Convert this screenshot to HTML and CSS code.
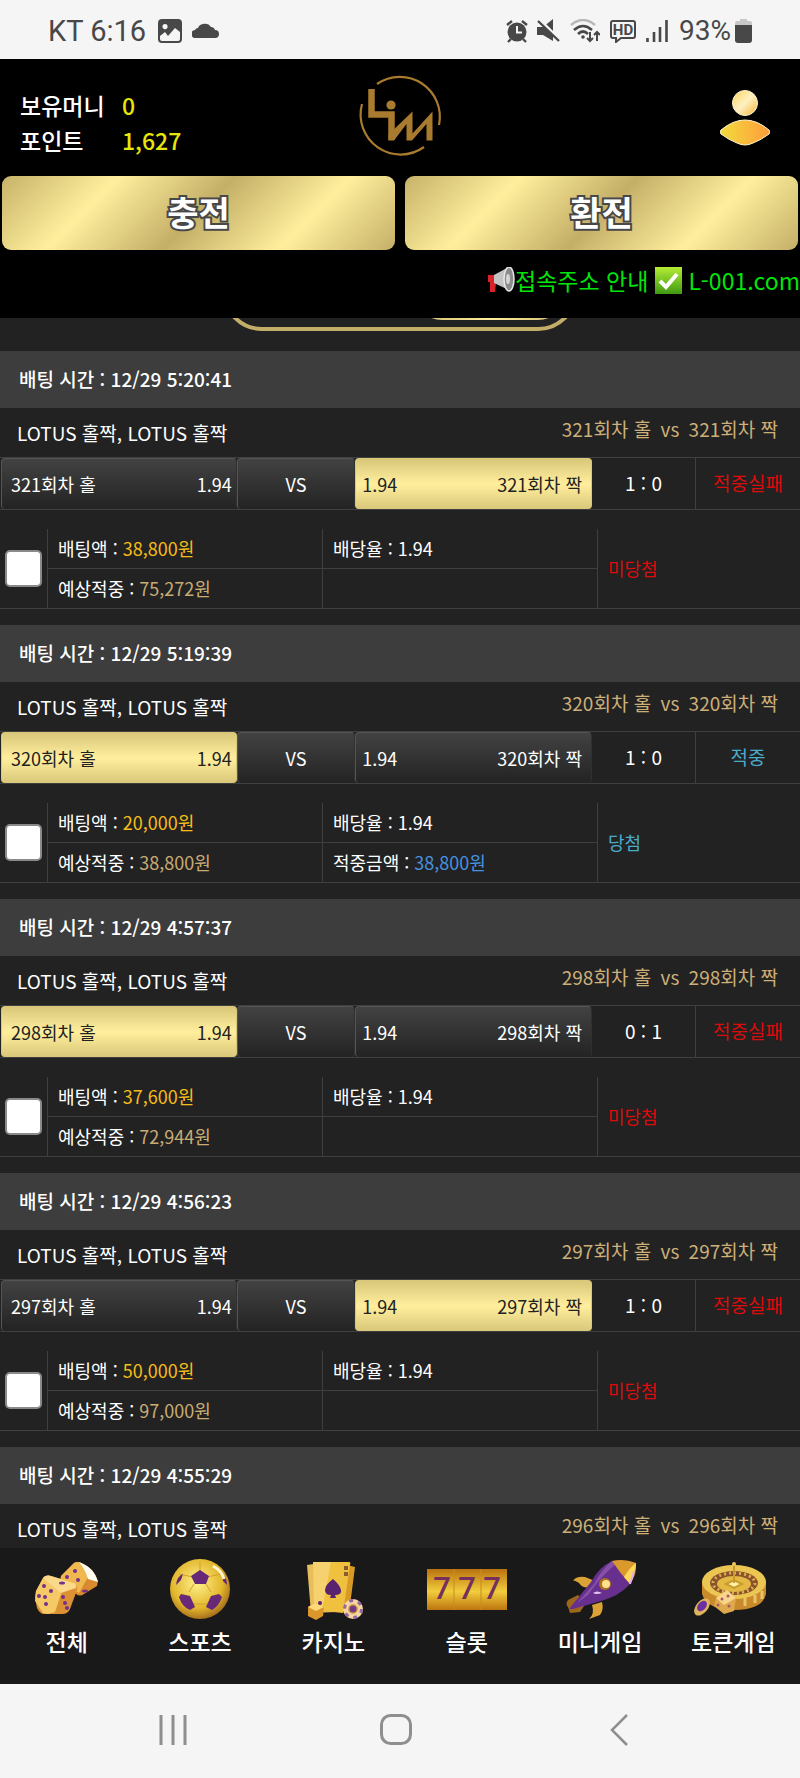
FILE: index.html
```html
<!DOCTYPE html>
<html lang="ko">

<head>
    <meta charset="UTF-8">
    <meta name="viewport" content="width=device-width, initial-scale=1.0">
    <title>배팅 내역</title>
    <link rel="stylesheet" href="styles.css">
</head>

<body>
    <div class="status-bar">
        <span>KT 6:16</span>
        <svg class="ic-photo" width="24" height="24" viewBox="0 0 24 24">
            <path fill="#484848" fill-rule="evenodd" d="M4 0h16q4 0 4 4v16q0 4-4 4H4q-4 0-4-4V4q0-4 4-4zM7 5a2.6 2.6 0 1 0 .1 0zM2 17v3q0 2 2 2h16q2 0 2-2v-7l-5-4-7 8-3-4z" />
        </svg>
        <svg width="27" height="15" viewBox="0 0 27 15">
            <path fill="#484848" d="M4 15a4 4 0 0 1-1-8q1-2 3-2a7 6 0 0 1 13-1q3 0 4 3a4 4 0 0 1 0 8z" />
        </svg>
        <div class="status-right">
            <svg width="22" height="24" viewBox="0 0 22 24">
                <circle cx="11" cy="13" r="9.5" fill="#484848" />
                <path d="M1 6l5-4M21 6l-5-4M5 20l-3 3M17 20l3 3" stroke="#484848" stroke-width="2.4" fill="none" />
                <path d="M11 7v6.500h5" stroke="#f5f5f5" stroke-width="2" fill="none" />
            </svg>
            <svg width="24" height="24" viewBox="0 0 24 24">
                <path fill="#484848" d="M0 8h6l10-8v22L6 16H0z" />
                <path d="M2 0l22 22" stroke="#f5f5f5" stroke-width="3" />
                <path d="M1 2l21 20" stroke="#484848" stroke-width="2.400" />
            </svg>
            <svg width="30" height="24" viewBox="0 0 30 24">
                <g fill="none" stroke-width="2.600">
                    <path d="M1 6q12-10 24 0" stroke="#b8b8b8" />
                    <path d="M4 11q9-8 18 0M8 15q5-5 10 0" stroke="#484848" />
                    <path d="M20 13v9m-3-3l3 3 3-3M27 22v-9m-3 3l3-3 3 3" stroke="#484848" stroke-width="2" />
                </g>
                <circle cx="13" cy="18" r="1.800" fill="#484848" />
            </svg>
            <svg width="28" height="24" viewBox="0 0 28 24">
                <path d="M4 2h20q2 0 2 2v13q0 2-2 2H12l-5 4v-4H4q-2 0-2-2V4q0-2 2-2z" fill="none" stroke="#484848" stroke-width="2" />
                <text class="hd-text" x="14" y="16" text-anchor="middle">HD</text>
            </svg>
            <svg width="22" height="24" viewBox="0 0 22 24">
                <path d="M1.500 19v4M8 13v10M14 8v15M20.500 1v22" stroke="#484848" stroke-width="2.600" />
            </svg>
            <div class="battery">
                <span>93%</span>
                <svg width="17" height="24" viewBox="0 0 17 24">
                    <path d="M5 0h7v2h3q2 0 2 2v4H0V4q0-2 2-2h3z" fill="#c8c8c8" />
                    <path d="M0 6h17v15q0 3-3 3H3q-3 0-3-3z" fill="#484848" />
                </svg>
            </div>
        </div>
    </div>

    <header class="header">
        <div class="header-top">
            <dl class="wallet">
                <dt>보유머니</dt>
                <dd>0</dd>
                <dt>포인트</dt>
                <dd>1,627</dd>
            </dl>
            <a href="#" class="logo" aria-label="LIM">
                <svg width="100" height="100" viewBox="0 0 100 100" fill="none" stroke="#a87b2e">
                    <path d="M27 20A40 40 0 0 1 89 61M74 83A40 40 0 0 1 12 40" stroke-width="2.200" />
                    <path d="M21.500 25v25.500h20V76" stroke-width="6.500" />
                    <path d="M38.500 76.500v-6l24-23v22l20-22v29h-6V60L62 76.500h-5.500V60L44 76.500z" fill="#a87b2e" stroke="none" />
                    <circle cx="41" cy="41" r="4.600" fill="#a87b2e" stroke="none" />
                </svg>
            </a>
            <a href="#" class="profile" aria-label="내 정보">
                <svg width="50" height="56" viewBox="0 0 50 56">
                    <defs>
                        <linearGradient id="head" x1="0" y1="0" x2="1" y2="1">
                            <stop offset="0" stop-color="#fbd558" />
                            <stop offset=".5" stop-color="#fff0c4" />
                            <stop offset="1" stop-color="#f5b32e" />
                        </linearGradient>
                        <linearGradient id="body">
                            <stop offset="0" stop-color="#f2dc3c" />
                            <stop offset="1" stop-color="#ff9c3c" />
                        </linearGradient>
                    </defs>
                    <circle cx="25" cy="13" r="12.500" fill="url(#head)" stroke="#fff2cc" />
                    <path d="M1 40Q13 30 25 30T49 40Q51 42 49 44Q41 50 33 53Q29 55 25 55T17 53Q9 50 1 44Q-1 42 1 40z" fill="url(#body)" stroke="#fff2cc" />
                </svg>
            </a>
        </div>
        <div class="money-buttons">
            <button type="button">충전</button>
            <button type="button">환전</button>
        </div>
        <div class="notice">
            <svg width="28" height="26" viewBox="0 0 28 26">
                <path d="M1 8h8v8l-1 9H3L3 15H1z" fill="#d8232a" />
                <path d="M7 8L20 1q8 9 4 23L7 16z" fill="#c4c4c4" />
                <ellipse cx="22" cy="12" rx="5" ry="12" fill="#8c8c8c" stroke="#e6e6e6" stroke-width="1.500" />
                <ellipse cx="21" cy="12" rx="2" ry="5" fill="#d6d6d6" />
            </svg>
            <span class="notice-label">접속주소 안내</span>
            <svg width="27" height="27" viewBox="0 0 27 27">
                <defs>
                    <linearGradient id="check" x1="0" y1="0" x2="0" y2="1">
                        <stop offset="0" stop-color="#b4ec34" />
                        <stop offset="1" stop-color="#3f9a12" />
                    </linearGradient>
                </defs>
                <rect width="27" height="27" fill="url(#check)" />
                <path d="M5 14l6 6L22 7" fill="none" stroke="#fff" stroke-width="4" />
            </svg>
            <span class="notice-url">L-001.com</span>
        </div>
    </header>

    <main class="bet-list">
        <div class="tab-wrap">
            <div class="tabs">
                <div class="tab-active"></div>
            </div>
        </div>

        <section class="bet">
            <h2 class="bet-time">배팅 시간 : 12/29 5:20:41</h2>
            <div class="bet-title">
                <span class="league">LOTUS 홀짝, LOTUS 홀짝</span>
                <span class="match">321회차 홀 <span>vs</span> 321회차 짝</span>
            </div>
            <table class="bet-row">
                <tr>
                    <td class="team"><div class="pick"><span>321회차 홀</span><span>1.94</span></div></td>
                    <td class="vs"><div class="pick">VS</div></td>
                    <td class="team away"><div class="pick selected"><span>1.94</span><span>321회차 짝</span></div></td>
                    <td class="score">1 : 0</td>
                    <td class="result lose">적중실패</td>
                </tr>
            </table>
            <table class="bet-info">
                <tr>
                    <td class="check" rowspan="2"><input type="checkbox" aria-label="선택"></td>
                    <td>배팅액 : <span class="amount">38,800원</span></td>
                    <td>배당율 : 1.94</td>
                    <td class="state lose" rowspan="2">미당첨</td>
                </tr>
                <tr>
                    <td>예상적중 : <span class="expect">75,272원</span></td>
                    <td></td>
                </tr>
            </table>
        </section>

        <section class="bet">
            <h2 class="bet-time">배팅 시간 : 12/29 5:19:39</h2>
            <div class="bet-title">
                <span class="league">LOTUS 홀짝, LOTUS 홀짝</span>
                <span class="match">320회차 홀 <span>vs</span> 320회차 짝</span>
            </div>
            <table class="bet-row">
                <tr>
                    <td class="team"><div class="pick selected"><span>320회차 홀</span><span>1.94</span></div></td>
                    <td class="vs"><div class="pick">VS</div></td>
                    <td class="team away"><div class="pick"><span>1.94</span><span>320회차 짝</span></div></td>
                    <td class="score">1 : 0</td>
                    <td class="result win">적중</td>
                </tr>
            </table>
            <table class="bet-info">
                <tr>
                    <td class="check" rowspan="2"><input type="checkbox" aria-label="선택"></td>
                    <td>배팅액 : <span class="amount">20,000원</span></td>
                    <td>배당율 : 1.94</td>
                    <td class="state win" rowspan="2">당첨</td>
                </tr>
                <tr>
                    <td>예상적중 : <span class="expect">38,800원</span></td>
                    <td>적중금액 : <span class="payout">38,800원</span></td>
                </tr>
            </table>
        </section>

        <section class="bet">
            <h2 class="bet-time">배팅 시간 : 12/29 4:57:37</h2>
            <div class="bet-title">
                <span class="league">LOTUS 홀짝, LOTUS 홀짝</span>
                <span class="match">298회차 홀 <span>vs</span> 298회차 짝</span>
            </div>
            <table class="bet-row">
                <tr>
                    <td class="team"><div class="pick selected"><span>298회차 홀</span><span>1.94</span></div></td>
                    <td class="vs"><div class="pick">VS</div></td>
                    <td class="team away"><div class="pick"><span>1.94</span><span>298회차 짝</span></div></td>
                    <td class="score">0 : 1</td>
                    <td class="result lose">적중실패</td>
                </tr>
            </table>
            <table class="bet-info">
                <tr>
                    <td class="check" rowspan="2"><input type="checkbox" aria-label="선택"></td>
                    <td>배팅액 : <span class="amount">37,600원</span></td>
                    <td>배당율 : 1.94</td>
                    <td class="state lose" rowspan="2">미당첨</td>
                </tr>
                <tr>
                    <td>예상적중 : <span class="expect">72,944원</span></td>
                    <td></td>
                </tr>
            </table>
        </section>

        <section class="bet">
            <h2 class="bet-time">배팅 시간 : 12/29 4:56:23</h2>
            <div class="bet-title">
                <span class="league">LOTUS 홀짝, LOTUS 홀짝</span>
                <span class="match">297회차 홀 <span>vs</span> 297회차 짝</span>
            </div>
            <table class="bet-row">
                <tr>
                    <td class="team"><div class="pick"><span>297회차 홀</span><span>1.94</span></div></td>
                    <td class="vs"><div class="pick">VS</div></td>
                    <td class="team away"><div class="pick selected"><span>1.94</span><span>297회차 짝</span></div></td>
                    <td class="score">1 : 0</td>
                    <td class="result lose">적중실패</td>
                </tr>
            </table>
            <table class="bet-info">
                <tr>
                    <td class="check" rowspan="2"><input type="checkbox" aria-label="선택"></td>
                    <td>배팅액 : <span class="amount">50,000원</span></td>
                    <td>배당율 : 1.94</td>
                    <td class="state lose" rowspan="2">미당첨</td>
                </tr>
                <tr>
                    <td>예상적중 : <span class="expect">97,000원</span></td>
                    <td></td>
                </tr>
            </table>
        </section>

        <section class="bet">
            <h2 class="bet-time">배팅 시간 : 12/29 4:55:29</h2>
            <div class="bet-title">
                <span class="league">LOTUS 홀짝, LOTUS 홀짝</span>
                <span class="match">296회차 홀 <span>vs</span> 296회차 짝</span>
            </div>
        </section>
    </main>

    <nav class="game-nav">
        <a href="#">
            <!-- dice -->
            <svg width="80" height="64" viewBox="3 0 80 64">
                <path d="M37 19L50 6q3-2 7 0 13 5 17 18l-1 5-13 8q-4 3-8 0L36 27z" fill="#d98a2e" />
                <path d="M37 19L50 6q3-2 7 0l7 14-9 16-19-9z" fill="#f0b950" />
                <path d="M55 5q15 5 19 20l-10-3q-3-10-9-17z" fill="#fffaf0" />
                <path d="M12 34l7-13q3-3 8-2l23 7q4 2 3 7l-7 19q-2 5-8 5H20q-4 0-7-6l-2-11z" fill="#dc9233" />
                <path d="M12 34l7-13q1-2 4-2l15 15-7 21-7 2-5-1-8-12z" fill="#f4c966" />
                <path d="M19 21q3-4 8-2l23 7q3 1 2 5l-15 5z" fill="#fbd98c" />
                <g fill="#75308c">
                    <circle cx="20" cy="29" r="2" />
                    <circle cx="27" cy="34" r="2" />
                    <circle cx="15" cy="39" r="2" />
                    <circle cx="21" cy="40" r="2" />
                    <circle cx="22" cy="47" r="2" />
                    <ellipse cx="38" cy="26" rx="3" ry="1.500" />
                    <circle cx="39" cy="40" r="2" />
                    <circle cx="41" cy="46" r="2" />
                    <circle cx="43" cy="51" r="2" />
                    <circle cx="43" cy="20" r="2" />
                    <circle cx="51" cy="14" r="2" />
                    <circle cx="54" cy="23" r="2" />
                    <ellipse cx="61" cy="34" rx="3" ry="1.500" />
                </g>
            </svg>
            <span>전체</span>
        </a>
        <a href="#">
            <!-- soccer ball -->
            <svg width="80" height="64" viewBox="0 0 80 64">
                <defs>
                    <radialGradient id="ball" cx=".45" cy=".4" r=".6">
                        <stop offset="0" stop-color="#fff08c" />
                        <stop offset=".7" stop-color="#e3b72c" />
                        <stop offset="1" stop-color="#a8711c" />
                    </radialGradient>
                </defs>
                <circle cx="40" cy="32" r="30" fill="url(#ball)" />
                <path d="M34 27l-5 8M46 27l5 8M33 20l-14-3M47 20l14-3M34 47h13M40 5v9" stroke="#d3a02c" fill="none" />
                <path d="M40 13l9 6-3 8H35l-4-8zM21 37l9 2 5 11-5 3q-8-3-11-13zM59 37l-8 2-5 11 6 3q7-4 10-13zM16 28q1-9 7-11l-2 6zM62 16q5 5 5 12l-4-4z" fill="#662877" />
                <path d="M53 9q9 5 11 13" stroke="#fff4cc" stroke-width="3" fill="none" />
            </svg>
            <span>스포츠</span>
        </a>
        <a href="#">
            <!-- cards -->
            <svg width="80" height="64" viewBox="0 0 80 64">
                <path d="M50 7l12 3-6 46-15-4z" fill="#d89a25" />
                <path d="M14 8l20-3 9 50-25 1z" fill="#e8bd5c" />
                <path d="M20 5h36q2 0 1 3l-7 48-29-3z" fill="#f0c03f" />
                <path d="M20 5h18l-9 49-8-1z" fill="#f5d170" />
                <path d="M40 22q7 6 8 11t-6 5l1 3h-6l1-3q-6 0-6-5t8-11z" fill="#5a2370" />
                <path d="M51 9h4v4h-4zM51 15h4v4h-4z" fill="#8a5a30" />
                <path d="M15 50l7-4 9 4-1 9-7 4-8-4z" fill="#db962c" />
                <path d="M15 50l7-4 9 4-8 4z" fill="#ffd978" />
                <circle cx="27" cy="46" r="2" fill="#5a2370" />
                <circle cx="60" cy="52" r="10" fill="#f4d7a0" />
                <circle cx="60" cy="52" r="8.500" fill="none" stroke="#9566a0" stroke-width="3" stroke-dasharray="4 5" />
                <circle cx="60" cy="52" r="5" fill="#d6a348" />
                <circle cx="60" cy="52" r="3.500" fill="#713b85" />
            </svg>
            <span>카지노</span>
        </a>
        <a href="#">
            <!-- slot reels -->
            <svg width="80" height="64" viewBox="0 0 80 64">
                <defs>
                    <linearGradient id="reel" x1="0" y1="0" x2="0" y2="1">
                        <stop offset="0" stop-color="#b9720f" />
                        <stop offset=".55" stop-color="#f2cd3c" />
                        <stop offset="1" stop-color="#bd7510" />
                    </linearGradient>
                </defs>
                <rect y="12" width="80" height="41" fill="url(#reel)" />
                <path d="M27 12v41M54 12v41" stroke="#c98c1c" />
                <g class="reel-text" text-anchor="middle">
                    <text x="15" y="42">7</text>
                    <text x="40" y="42">7</text>
                    <text x="65" y="42">7</text>
                </g>
            </svg>
            <span>슬롯</span>
        </a>
        <a href="#">
            <!-- rocket -->
            <svg width="80" height="64" viewBox="0 0 80 64">
                <path d="M31 30q-8 2-12-4-7-4-6-2 3-5 12-4l10 4zM42 45q2 8-2 13l-11 4q6-5 3-14z" fill="#dba235" />
                <path d="M18 38l-10 5q-3 4 0 7l2 6 10-1 6-9z" fill="#9d671b" />
                <path d="M9 52l22-27Q39 10 52 4q13-2 24 2 1 12-7 22-10 11-28 16L13 52z" fill="#67308f" />
                <path d="M34 27Q42 12 52 4l4 3Q41 19 28 38l-11 8z" fill="#8650a6" />
                <path d="M52 4q12-3 24 2 1 11-6 21-10-11-18-23z" fill="#d9992b" />
                <path d="M64 20q6-10 12-14-1 12-6 21z" fill="#ffd75a" />
                <path d="M74 14l-4 13" stroke="#e2aeea" stroke-width="2" />
                <circle cx="45" cy="27" r="6" fill="#b27022" />
                <circle cx="46" cy="27" r="4" fill="#ffe38c" />
                <path d="M33 36q4-3 9 0-6 2-9 0z" fill="#e6c2ee" />
            </svg>
            <span>미니게임</span>
        </a>
        <a href="#">
            <!-- roulette -->
            <svg width="80" height="64" viewBox="0 0 80 64">
                <path d="M9 24v13q5 16 33 16 28-1 31-16V24z" fill="#c98a2b" />
                <path d="M52 49v-8M62 46v-8M69 42v-8" stroke="#e8c368" stroke-width="3" />
                <ellipse cx="41" cy="25" rx="32" ry="17" fill="#ecc653" />
                <ellipse cx="41" cy="26" rx="24" ry="12" fill="#8a522d" />
                <ellipse cx="41" cy="26" rx="21" ry="10" fill="none" stroke="#dcb04d" stroke-width="3" stroke-dasharray="2 3" />
                <ellipse cx="41" cy="27" rx="17" ry="8" fill="#e3b944" />
                <path d="M41 7v19M33 27l8-4 8 4-8 4z" stroke="#c99a2b" stroke-width="2" fill="#fff0a5" />
                <circle cx="41" cy="7" r="2" fill="#e9c95d" />
                <path d="M23 41l11-8 9 8-2 13-10 3-10-8z" fill="#e0a84c" />
                <path d="M23 41l11-8 9 8-12 7z" fill="#f8d58a" />
                <g fill="#a55a68">
                    <circle cx="29" cy="42" r="1.500" />
                    <circle cx="35" cy="39" r="1.500" />
                    <circle cx="25" cy="48" r="1.500" />
                    <circle cx="36" cy="49" r="1.500" />
                </g>
                <ellipse cx="9" cy="50" rx="10" ry="6" fill="#e0b45c" transform="rotate(-50 9 50)" />
                <ellipse cx="9" cy="49" rx="6" ry="4" fill="#6a2fa0" transform="rotate(-50 9 49)" />
            </svg>
            <span>토큰게임</span>
        </a>
    </nav>

    <div class="system-nav">
        <button type="button" aria-label="최근 앱">
            <svg width="32" height="32" viewBox="0 0 32 32">
                <path d="M3 1v30M15 1v30M27 1v30" />
            </svg>
        </button>
        <button type="button" aria-label="홈">
            <svg width="32" height="32" viewBox="0 0 32 32">
                <rect x="1.500" y="1.500" width="29" height="28" rx="9" />
            </svg>
        </button>
        <button type="button" aria-label="뒤로">
            <svg width="32" height="32" viewBox="0 0 32 32">
                <path d="M25 1L10 16l15 15" stroke-width="2.500" />
            </svg>
        </button>
    </div>
</body>

</html>
```
FILE: styles.css
```css
* {
    box-sizing: border-box;
}

body {
    display: flex;
    flex-direction: column;
    height: 100vh;
    margin: 0;
    background-color: #222;
    color: #fff;
    font-family: "Noto Sans CJK KR", sans-serif;
    font-size: 18px;
}

a {
    color: inherit;
    text-decoration: none;
}

svg {
    display: block;
    flex-shrink: 0;
}

button {
    font-family: inherit;
    cursor: pointer;
}

/* phone status bar */
.status-bar {
    display: flex;
    align-items: center;
    flex-shrink: 0;
    gap: 10px;
    height: 59px;
    padding: 2px 48px 0 48px;
    background-color: #f5f5f5;
    color: #484848;
    font-family: Roboto, sans-serif;
    font-size: 29px;
}

.ic-photo {
    margin-left: 2px;
}

.status-right {
    display: flex;
    align-items: center;
    gap: 9px;
    margin-left: auto;
}

.battery {
    display: flex;
    align-items: center;
    gap: 4px;
    margin-left: 2px;
    font-size: 28px;
}

.hd-text {
    fill: #484848;
    font-size: 15px;
    font-weight: bold;
}

/* header */
.header {
    flex-shrink: 0;
    height: 259px;
    background-color: #000;
}

.header-top {
    display: grid;
    grid-template-columns: 1fr 100px 1fr;
    align-items: center;
    height: 117px;
    padding: 0 30px 0 20px;
}

.wallet {
    display: grid;
    grid-template-columns: 102px 1fr;
    margin: 10px 0 0;
    font-size: 23px;
    font-weight: 500;
    line-height: 35px;
}

.wallet dd {
    margin: 0;
    color: #e6e60a;
}

.logo {
    margin: 0 0 8px 5px;
}

.profile {
    justify-self: end;
}

.money-buttons {
    display: flex;
    gap: 10px;
    padding: 0 2px;
}

.money-buttons button {
    flex: 1;
    height: 74px;
    padding: 0 0 2px;
    border: none;
    border-radius: 9px;
    background: linear-gradient(135deg, #c7b269 0%, #ffef9d 25%, #c4af67 50%, #ffef9d 75%, #c4af67 100%);
    color: #fff;
    font-size: 34px;
    font-weight: bold;
    line-height: 72px;
    paint-order: stroke fill;
    -webkit-text-stroke: 4px #484848;
}

.notice {
    display: flex;
    align-items: center;
    justify-content: flex-end;
    height: 60px;
    color: #00e60c;
    font-size: 23px;
    white-space: nowrap;
}

.notice-label {
    margin-right: 7px;
}

.notice-url {
    margin-left: 6px;
}

/* bet history */
.bet-list {
    flex: 1;
    min-height: 0;
    overflow-y: auto;
    scrollbar-width: none;
}

/* only the lower edge of the tabs shows under the header */
.tab-wrap {
    display: flex;
    justify-content: center;
    margin-top: -67px;
    padding-bottom: 20px;
}

.tabs {
    display: flex;
    justify-content: flex-end;
    width: 356px;
    height: 80px;
    padding: 7px;
    border: 4px solid #c3ae69;
    border-radius: 40px;
}

.tab-active {
    width: 154px;
    border-radius: 30px;
    background: linear-gradient(90deg, #cdb96f, #ffef9d, #cdb96f);
}

.bet {
    padding-bottom: 16px;
}

.bet-time {
    height: 57px;
    margin: 0;
    padding-left: 19px;
    background-color: #3d3d3d;
    font-size: 19px;
    font-weight: 500;
    line-height: 55px;
}

.bet-title {
    display: flex;
    justify-content: space-between;
    height: 49px;
    padding: 0 22px 0 17px;
    font-size: 19px;
}

.league {
    line-height: 49px;
}

.match {
    color: #cdb079;
    line-height: 41px;
}

.match span {
    margin: 0 4px;
}

table {
    width: 100%;
    border-collapse: separate;
    border-spacing: 0;
    table-layout: fixed;
}

td {
    padding: 0;
}

.bet-row {
    margin-bottom: 19px;
    border-top: 1px solid #3f3f3f;
    border-bottom: 1px solid #3f3f3f;
    text-align: center;
}

.bet-row td {
    height: 51px;
}

.bet-row td:first-child {
    padding-left: 1px;
}

.team {
    width: 29.6%;
}

.vs {
    width: 14.8%;
}

.bet-row .score,
.bet-row .result {
    padding-bottom: 2px;
    font-size: 19px;
}

.score {
    border-right: 1px solid #3f3f3f;
}

.pick {
    display: flex;
    align-items: center;
    justify-content: center;
    height: 51px;
    padding-bottom: 1px;
    border: 1px solid #555;
    border-right-color: #303030;
    border-bottom: none;
    border-radius: 4px;
    background: linear-gradient(#424242, #232323);
}

.team .pick {
    justify-content: space-between;
    padding: 0 4px 1px 9px;
}

.away .pick {
    padding: 0 9px 1px 6px;
}

.pick.selected {
    border-color: #d9c77a;
    background: linear-gradient(#d9c77a, #ffef9d 50%, #d9c77a);
    color: #222;
}

.lose {
    color: #dc0c0c;
}

.win {
    color: #4aaccb;
}

.bet-info {
    border-bottom: 1px solid #3f3f3f;
}

.bet-info td {
    height: 39px;
    padding: 0 0 1px 10px;
    border-left: 1px solid #3f3f3f;
}

.bet-info tr:first-child td:not([rowspan]) {
    height: 40px;
    border-bottom: 1px solid #3f3f3f;
}

.bet-info .check {
    width: 47px;
    padding: 0 0 0 5px;
    border-left: none;
}

.bet-info .state {
    width: 203px;
}

.check input {
    display: block;
    width: 37px;
    height: 37px;
    margin: 0;
    border: 2px solid #8a8a8a;
    border-radius: 5px;
    background-color: #fff;
    appearance: none;
}

.check input:checked {
    background-color: #c3ae69;
}

.amount {
    color: #f5bd1a;
}

.expect {
    color: #c9ab74;
}

.payout {
    color: #4592e0;
}

/* bottom game menu */
.game-nav {
    display: flex;
    flex-shrink: 0;
    height: 136px;
    padding-top: 9px;
    background-color: #191919;
}

.game-nav a {
    display: flex;
    flex: 1;
    flex-direction: column;
    align-items: center;
    font-size: 23px;
    font-weight: 500;
    line-height: 40px;
}

.reel-text {
    fill: #75305c;
    font-family: Roboto, sans-serif;
    font-size: 31px;
    font-weight: 500;
}

/* phone navigation */
.system-nav {
    display: flex;
    flex-shrink: 0;
    justify-content: center;
    height: 94px;
    padding: 0 8px 2px 0;
    background-color: #f5f5f5;
}

.system-nav button {
    display: flex;
    align-items: center;
    justify-content: center;
    width: 28%;
    padding: 0;
    border: none;
    background: none;
}

.system-nav svg {
    fill: none;
    stroke: #8e8e8e;
    stroke-width: 3;
}
```
